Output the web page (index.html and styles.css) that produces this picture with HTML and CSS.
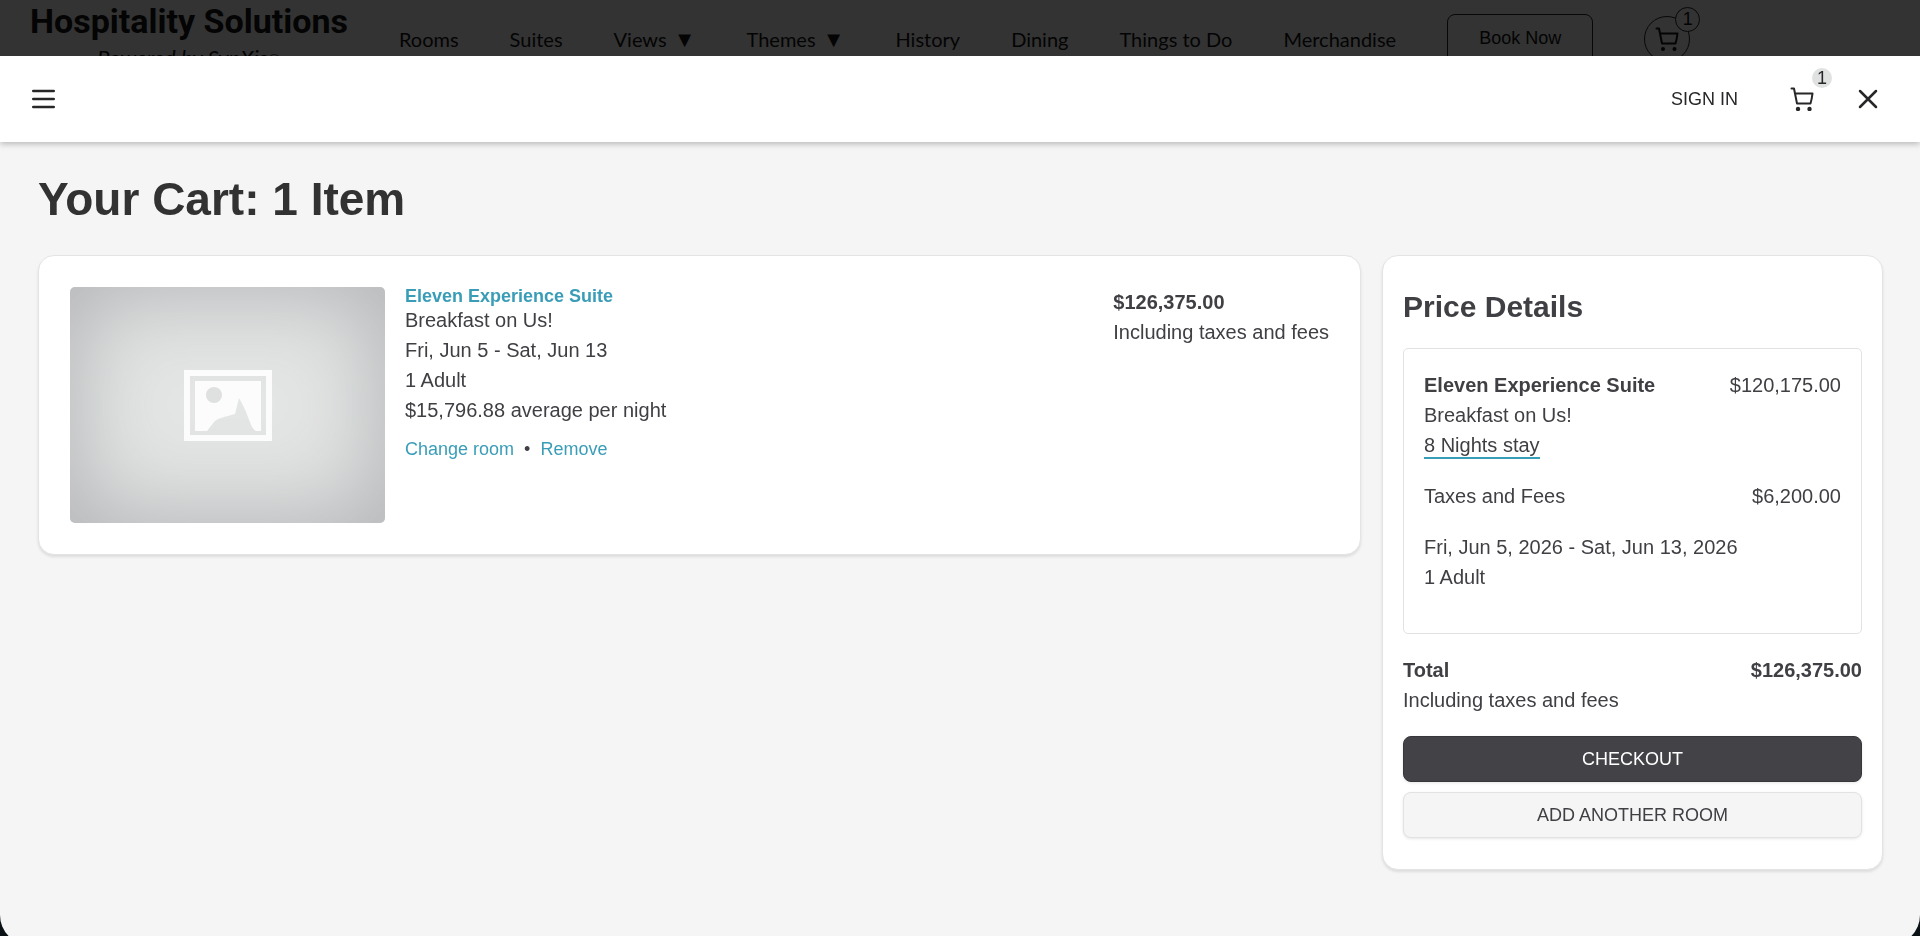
FILE: index.html
```html
<!DOCTYPE html>
<html lang="en">
  <head>
    <meta charset="UTF-8" />
    <meta name="viewport" content="width=device-width, initial-scale=1.0" />
    <title>Your Cart</title>
    <link rel="stylesheet" href="styles.css">
  </head>
  <body>
    <!-- Site header, dimmed behind the drawer -->
    <header class="site-header">
      <div class="brand">
        <span class="brand-name">Hospitality Solutions</span>
        <span class="brand-tag">Powered by SynXis<span class="reg">®</span></span>
      </div>
      <nav class="site-nav">
        <a href="#">Rooms</a>
        <a href="#">Suites</a>
        <a href="#">Views <span class="caret">▼</span></a>
        <a href="#">Themes <span class="caret">▼</span></a>
        <a href="#">History</a>
        <a href="#">Dining</a>
        <a href="#">Things to Do</a>
        <a href="#">Merchandise</a>
        <button class="book-btn" type="button">Book Now</button>
        <button class="site-cart" type="button" aria-label="Cart">
          <svg width="24" height="24" viewBox="0 0 24 24" fill="none" stroke="currentColor" stroke-width="2">
            <path d="M1.500 1.500H4l3 15h13.500c1-3 1.500-6 2-10H5" stroke-linejoin="round" stroke-linecap="round" />
            <circle cx="8" cy="22" r="2" fill="currentColor" stroke="none" />
            <circle cx="19.500" cy="22" r="2" fill="currentColor" stroke="none" />
          </svg>
          <span class="site-badge">1</span>
        </button>
      </nav>
    </header>

    <!-- Cart drawer -->
    <div class="drawer">
      <div class="drawer-bar">
        <button class="icon-btn" type="button" aria-label="Menu">
          <svg width="23" height="20" viewBox="0 0 23 20" stroke="currentColor" stroke-width="2.400" stroke-linecap="round">
            <path d="M1.200 2h20.600M1.200 10h20.600M1.200 18h20.600" />
          </svg>
        </button>
        <div class="drawer-actions">
          <button class="sign-in" type="button">SIGN IN</button>
          <button class="icon-btn" type="button" aria-label="Cart">
            <svg width="24" height="24" viewBox="0 0 24 24" fill="none" stroke="currentColor" stroke-width="2">
              <path d="M1.500 1.500H4l3 15h13.500c1-3 1.500-6 2-10H5" stroke-linejoin="round" stroke-linecap="round" />
              <circle cx="8" cy="22" r="2.200" fill="currentColor" stroke="none" />
              <circle cx="19.500" cy="22" r="2.200" fill="currentColor" stroke="none" />
            </svg>
            <span class="badge">1</span>
          </button>
          <button class="icon-btn" type="button" aria-label="Close">
            <svg width="20" height="20" viewBox="0 0 20 20" stroke="currentColor" stroke-width="2.500" stroke-linecap="round">
              <path d="M2 2l16 16M18 2L2 18" />
            </svg>
          </button>
        </div>
      </div>

      <main class="cart">
        <h1>Your Cart: 1 Item</h1>
        <div class="cart-grid">
          <section class="card cart-item">
            <div class="thumb">
              <svg viewBox="0 0 88 71" width="88" height="71">
                <path fill="#fcfcfc" fill-rule="evenodd" d="M0 0h88v71H0zM6 6v59h76V6z" />
                <path fill="#fcfcfc" d="M11 11h66v50h-5c-4-2-6-9-8-14-3-8-6-14-9-19l-4 16c-10 3-18 4-21 8l-7 9H11z" />
                <circle cx="30" cy="25" r="8" fill="#dfe0e0" />
              </svg>
            </div>
            <div class="item-info">
              <a class="item-name" href="#">Eleven Experience Suite</a>
              <p>Breakfast on Us!</p>
              <p>Fri, Jun 5 - Sat, Jun 13</p>
              <p>1 Adult</p>
              <p>$15,796.88 average per night</p>
              <div class="item-links">
                <a href="#">Change room</a>
                <span>•</span>
                <a href="#">Remove</a>
              </div>
            </div>
            <div class="item-price">
              <strong>$126,375.00</strong>
              <p>Including taxes and fees</p>
            </div>
          </section>

          <aside class="card summary">
            <h2>Price Details</h2>
            <div class="summary-box">
              <div class="row">
                <strong>Eleven Experience Suite</strong>
                <span>$120,175.00</span>
              </div>
              <p>Breakfast on Us!</p>
              <p><a class="nights" href="#">8 Nights stay</a></p>
              <div class="row taxes">
                <span>Taxes and Fees</span>
                <span>$6,200.00</span>
              </div>
              <p>Fri, Jun 5, 2026 - Sat, Jun 13, 2026</p>
              <p>1 Adult</p>
            </div>
            <div class="row">
              <strong>Total</strong>
              <strong>$126,375.00</strong>
            </div>
            <p>Including taxes and fees</p>
            <div class="summary-buttons">
              <button class="btn btn-dark" type="button">CHECKOUT</button>
              <button class="btn btn-light" type="button">ADD ANOTHER ROOM</button>
            </div>
          </aside>
        </div>
      </main>
    </div>
  </body>
</html>
```

FILE: styles.css
```css
* {
  box-sizing: border-box;
}
body {
  margin: 0;
  min-height: 100vh;
  overflow: hidden;
  background: #0b1216;
  color: #3f3f44;
  font-family: "Liberation Sans", Arial, sans-serif;
  font-size: 20px;
  line-height: 30px;
}
h1,
h2,
p {
  margin: 0;
}
button {
  font-family: inherit;
  cursor: pointer;
}
svg {
  display: block;
}

/* Site header */
.site-header {
  display: flex;
  align-items: center;
  gap: 51px;
  height: 77px;
  padding-left: 30px;
  background: #333;
  color: #040404;
}
.brand {
  display: flex;
  flex-direction: column;
  align-items: center;
}
.brand-name {
  font-family: Roboto, sans-serif;
  font-size: 34px;
  font-weight: 700;
  line-height: 40px;
}
.brand-tag {
  font-family: Lato, sans-serif;
  font-size: 22px;
  font-style: italic;
  line-height: 34px;
}
.reg {
  font-size: 16px;
}
.site-nav {
  display: flex;
  align-items: center;
  gap: 51px;
}
.site-nav a {
  color: inherit;
  font-family: Lato, sans-serif;
  text-decoration: none;
  white-space: nowrap;
}
.caret {
  margin-left: 2px;
  font-size: 22px;
}
.book-btn {
  height: 50px;
  padding: 0 31px;
  border: 1px solid #080808;
  border-radius: 8px;
  background: transparent;
  color: inherit;
  font-size: 18px;
}
.site-cart {
  position: relative;
  display: grid;
  place-items: center;
  width: 46px;
  height: 46px;
  padding: 0;
  border: 1px solid #080808;
  border-radius: 50%;
  background: transparent;
  color: inherit;
}
.site-badge {
  position: absolute;
  top: -10px;
  right: -11px;
  width: 25px;
  height: 25px;
  border: 1px solid #080808;
  border-radius: 50%;
  background: #333;
  font-size: 18px;
  line-height: 23px;
}

/* Drawer over the page */
.drawer {
  position: fixed;
  top: 56px;
  right: 0;
  bottom: -9px;
  left: 0;
  overflow: auto;
  border-radius: 0 0 30px 30px;
  background: #f5f5f5;
}
.drawer-bar {
  display: flex;
  align-items: center;
  justify-content: space-between;
  height: 86px;
  padding: 0 42px 0 32px;
  background: #fff;
  box-shadow: 0 2px 6px rgba(0, 0, 0, 0.25);
  color: #27272a;
}
.drawer-actions {
  display: flex;
  align-items: center;
  gap: 44px;
}
.icon-btn {
  position: relative;
  padding: 0;
  border: 0;
  background: none;
  color: inherit;
}
.sign-in {
  padding: 0 8px;
  border: 0;
  background: none;
  color: inherit;
  font-size: 18px;
}
.badge {
  position: absolute;
  top: -19px;
  right: -18px;
  width: 20px;
  height: 20px;
  border-radius: 50%;
  background: #e0e2e1;
  font-size: 18px;
  line-height: 20px;
}

/* Cart */
.cart {
  padding: 27px 37px 27px 38px;
}
h1 {
  color: #323232;
  font-size: 46px;
  line-height: 60px;
}
.cart-grid {
  display: grid;
  grid-template-columns: minmax(0, 1fr) 501px;
  align-items: start;
  gap: 21px;
  margin-top: 26px;
}
.card {
  border: 1px solid #e4e4e4;
  border-radius: 16px;
  background: #fff;
  box-shadow: 0 2px 3px rgba(0, 0, 0, 0.1);
}
.cart-item {
  display: flex;
  gap: 20px;
  padding: 31px;
}
.thumb {
  display: grid;
  place-items: center;
  flex: none;
  width: 315px;
  height: 236px;
  border-radius: 5px;
  background: #e4e6e5;
  box-shadow: inset 0 0 90px 10px #b4b5b8;
}
.item-info {
  flex: 1;
}
.item-name,
.item-links {
  font-size: 18px;
}
.item-name {
  display: block;
  font-weight: 700;
  line-height: 18px;
}
.item-info a {
  color: #3a9db8;
  text-decoration: none;
}
.item-links {
  display: flex;
  gap: 10px;
  margin-top: 9px;
}
.item-price strong {
  display: block;
}
.summary {
  padding: 31px 20px;
}
h2 {
  font-size: 30px;
  line-height: 40px;
}
.summary-box {
  margin: 21px 0;
  padding: 21px 20px 41px;
  border: 1px solid #e2e2e2;
  border-radius: 5px;
}
.row {
  display: flex;
  justify-content: space-between;
}
.nights {
  padding-bottom: 1px;
  border-bottom: 2px solid #3a9db8;
  color: inherit;
  text-decoration: none;
}
.taxes {
  margin: 21px 0;
}
.summary-buttons {
  display: grid;
  gap: 10px;
  margin-top: 21px;
}
.btn {
  height: 46px;
  border-radius: 8px;
  box-shadow: 0 1px 3px rgba(0, 0, 0, 0.1);
  font-size: 18px;
}
.btn-dark {
  border: 1px solid #37373b;
  background: #424247;
  color: #fff;
}
.btn-light {
  border: 1px solid #e2e2e2;
  background: #f5f5f5;
  color: #3f3f44;
}
```
